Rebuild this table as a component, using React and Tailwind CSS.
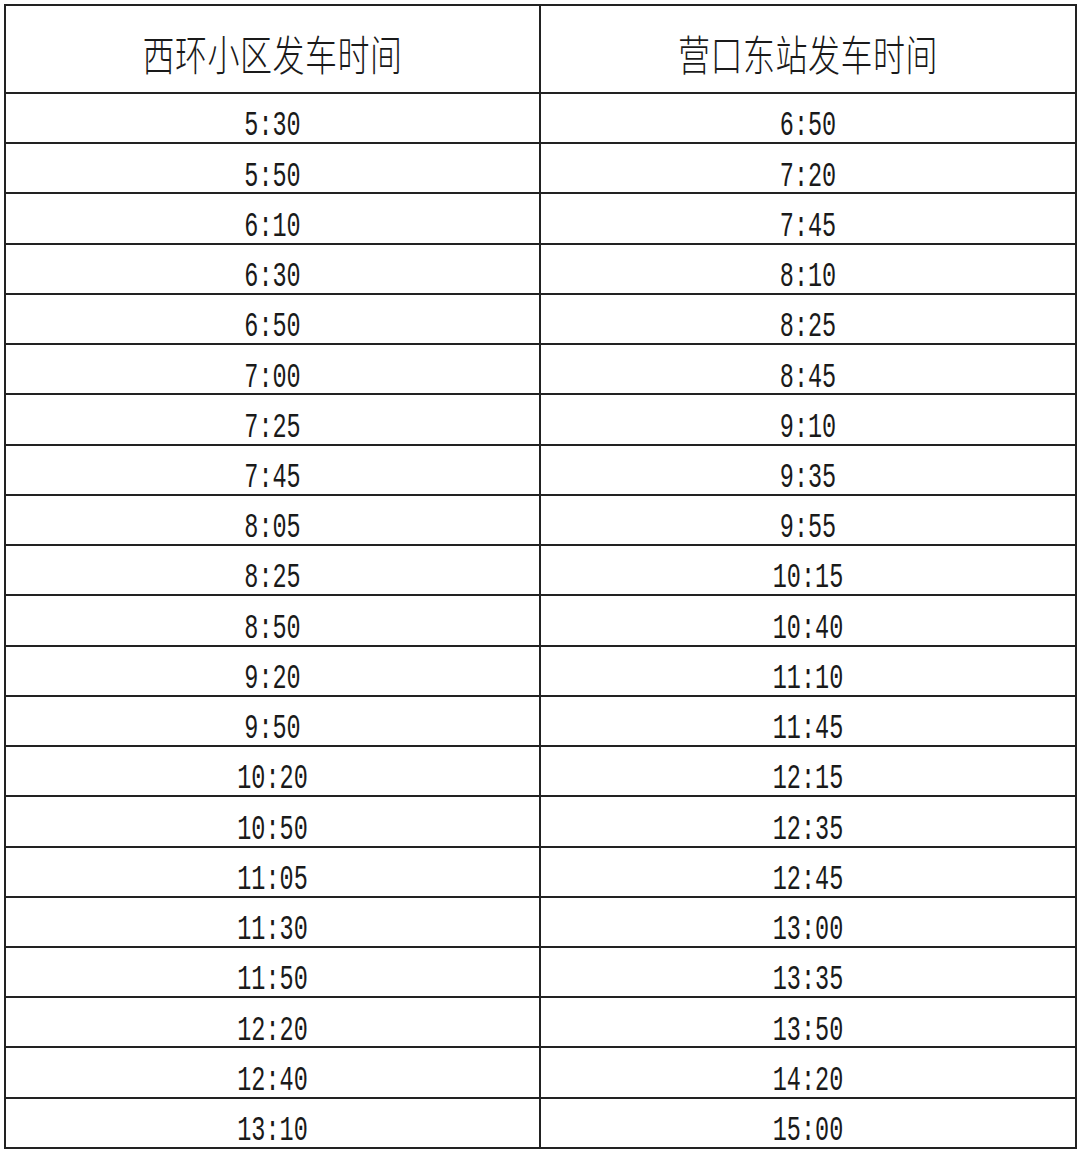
const ROWS = [
  ["5:30", "6:50"],
  ["5:50", "7:20"],
  ["6:10", "7:45"],
  ["6:30", "8:10"],
  ["6:50", "8:25"],
  ["7:00", "8:45"],
  ["7:25", "9:10"],
  ["7:45", "9:35"],
  ["8:05", "9:55"],
  ["8:25", "10:15"],
  ["8:50", "10:40"],
  ["9:20", "11:10"],
  ["9:50", "11:45"],
  ["10:20", "12:15"],
  ["10:50", "12:35"],
  ["11:05", "12:45"],
  ["11:30", "13:00"],
  ["11:50", "13:35"],
  ["12:20", "13:50"],
  ["12:40", "14:20"],
  ["13:10", "15:00"],
];

function HeaderCell({ children, last }) {
  return (
    <div
      className={`h-[88px] flex items-center justify-center border-b-2 border-[#222] ${
        last ? "" : "border-r-2"
      }`}
    >
      <span
        className="inline-block pt-[6px] text-[32px] font-light leading-none tracking-[0.5px] text-[#1a1a1a] scale-y-[1.3]"
        style={{ fontFamily: '"Noto Sans CJK SC", sans-serif' }}
      >
        {children}
      </span>
    </div>
  );
}

function TimeCell({ children, last }) {
  return (
    <div
      className={`h-[50.24px] flex items-center justify-center border-b-2 border-[#222] ${
        last ? "" : "border-r-2"
      }`}
    >
      <span
        className="inline-block pt-[10px] text-[23.5px] leading-none text-[#1a1a1a] scale-y-[1.5]"
        style={{ fontFamily: '"Liberation Mono", monospace' }}
      >
        {children}
      </span>
    </div>
  );
}

export default function App() {
  return (
    <div className="w-[1080px] h-[1154px] bg-white overflow-hidden pt-[4px] pl-[4px]">
      <div className="w-[1073px] border-t-2 border-l-2 border-r-2 border-[#222] grid grid-cols-[535px_1fr]">
        <HeaderCell>西环小区发车时间</HeaderCell>
        <HeaderCell last>营口东站发车时间</HeaderCell>
        {ROWS.map(([a, b]) => (
          <div key={a} className="contents">
            <TimeCell>{a}</TimeCell>
            <TimeCell last>{b}</TimeCell>
          </div>
        ))}
      </div>
    </div>
  );
}
